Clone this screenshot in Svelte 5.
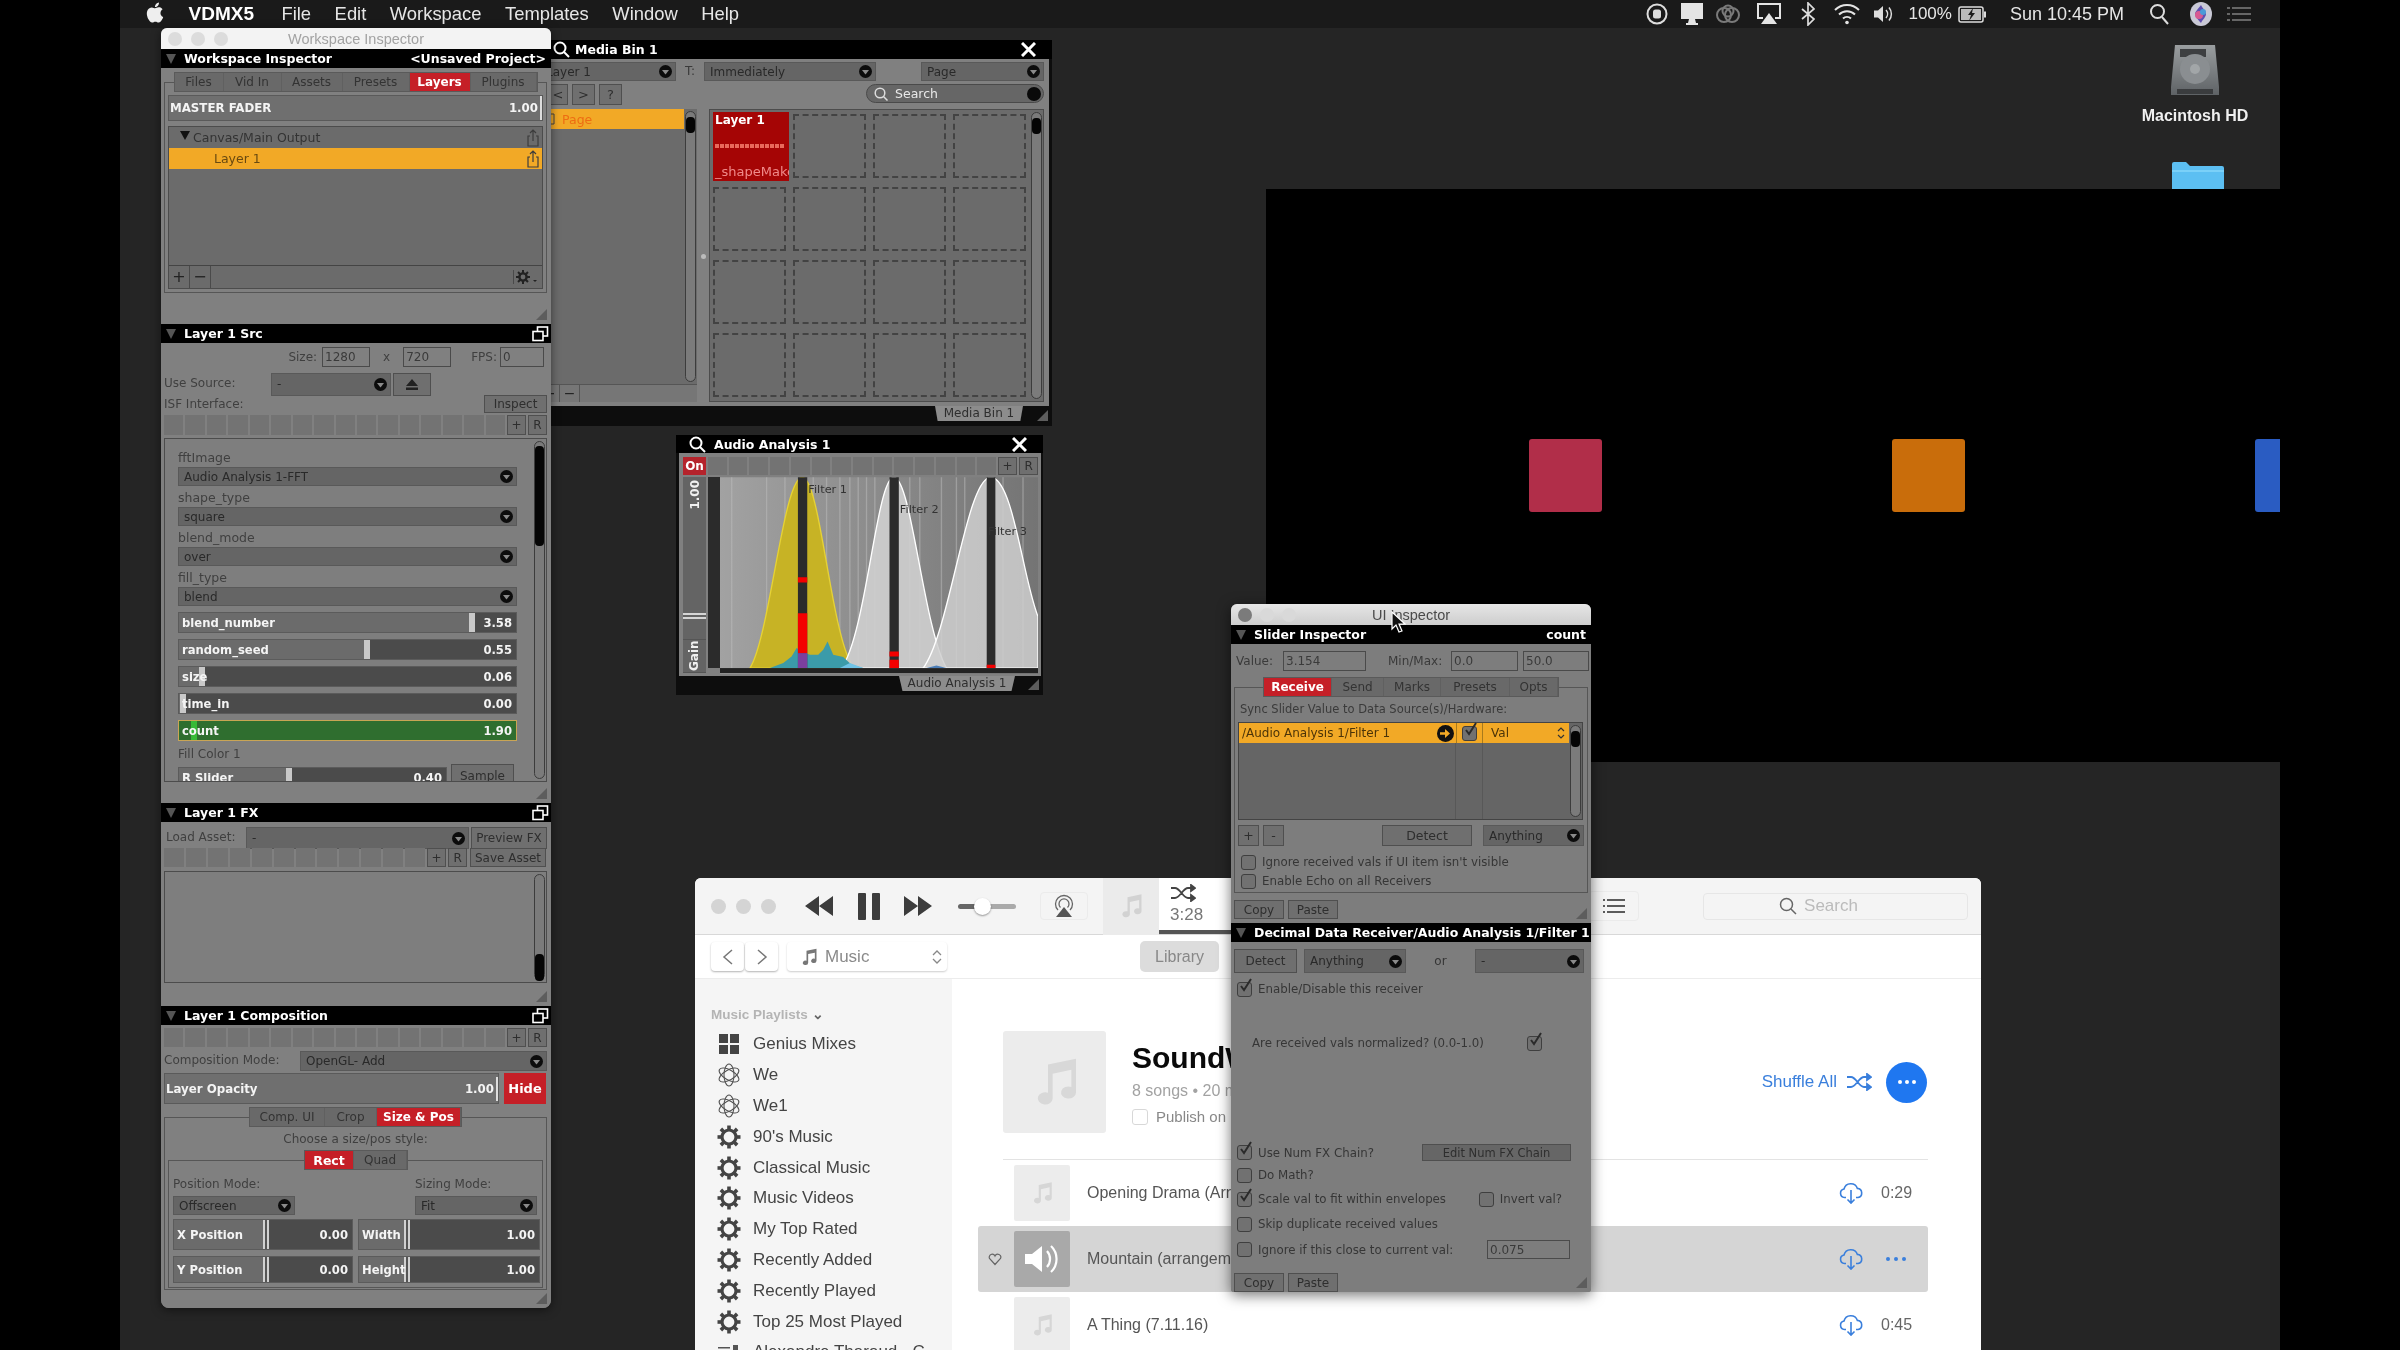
<script>
  const wsTabs = [
    { t: 'Files', w: 49 }, { t: 'Vid In', w: 58 }, { t: 'Assets', w: 61 },
    { t: 'Presets', w: 67 }, { t: 'Layers', w: 61, on: true }, { t: 'Plugins', w: 66 }
  ];
  const compTabs = [{ t: 'Comp. UI', w: 75 }, { t: 'Crop', w: 52 }, { t: 'Size & Pos', w: 84, on: true }];
  const rectTabs = [{ t: 'Rect', w: 49, on: true }, { t: 'Quad', w: 53 }];
  const uiTabs = [
    { t: 'Receive', w: 68, on: true }, { t: 'Send', w: 52 }, { t: 'Marks', w: 57 },
    { t: 'Presets', w: 69 }, { t: 'Opts', w: 48 }
  ];
  const isfSelects = [
    { label: 'fftImage', val: 'Audio Analysis 1-FFT' },
    { label: 'shape_type', val: 'square' },
    { label: 'blend_mode', val: 'over' },
    { label: 'fill_type', val: 'blend' }
  ];
  const isfSliders = [
    { label: 'blend_number', val: '3.58', pct: 86 },
    { label: 'random_seed', val: '0.55', pct: 55 },
    { label: 'size', val: '0.06', pct: 6 },
    { label: 'time_in', val: '0.00', pct: 0.4 }
  ];
  const lights = [1, 2, 3];
  const strip16 = Array(16).fill(0);
  const strip14 = Array(12).fill(0);
  const cells = Array(15).fill(0);
  const lines = [185, 290, 345, 430, 470, 510, 540, 565, 590, 615, 720, 750, 815, 860, 885, 1000, 1060];
  const playlists = ['90\'s Music', 'Classical Music', 'Music Videos', 'My Top Rated', 'Recently Added', 'Recently Played', 'Top 25 Most Played'];
  const gearTeeth = [0, 45, 90, 135, 180, 225, 270, 315];
  const atom = [0, 60, 120];
  const songs = [
    { name: 'Opening Drama (Arrangement)', time: '0:29' },
    { name: 'Mountain (arrangement)', playing: true },
    { name: 'A Thing (7.11.16)', time: '0:45' }
  ];
</script>

{#snippet head(title, right, showIcon)}
  <div class="head">
    <span class="disclosure"></span>
    <span class="head-title">{title}</span>
    {#if right}<span class="head-right">{right}</span>{/if}
    {#if showIcon}
      <svg class="detach" width="17" height="16" viewBox="0 0 17 16" fill="none" stroke="#fff" stroke-width="1.6">
        <rect x="5.5" y="1" width="10" height="9" /><rect x="1" y="5.5" width="10" height="9" fill="#000" />
      </svg>
    {/if}
  </div>
{/snippet}

{#snippet floatHead(title)}
  <div class="head float">
    <svg width="19" height="19" viewBox="0 0 19 19" fill="none" stroke="#fff" stroke-width="2"><circle cx="8" cy="8" r="5.5" /><path d="M12 12l5 5" /></svg>
    <span class="head-title">{title}</span>
    <svg class="close" width="15" height="15" viewBox="0 0 15 15" stroke="#fff" stroke-width="3"><path d="M1 1l13 13M14 1L1 14" /></svg>
  </div>
{/snippet}

{#snippet sel(text)}
  <div class="sel">
    <span>{text}</span>
    <svg width="13" height="13" viewBox="0 0 13 13"><circle cx="6.5" cy="6.5" r="6.5" fill="#0c0c0c" /><path d="M3 5h7L6.5 9.5z" fill="#8a8a8a" /></svg>
  </div>
{/snippet}

{#snippet tabs(items)}
  <div class="tabs">
    {#each items as tab}
      <span class="tab" class:on={tab.on} style="width:{tab.w}px">{tab.t}</span>
    {/each}
  </div>
{/snippet}

{#snippet strip(list)}
  <div class="strip">
    {#each list as _}<span class="cell"></span>{/each}
    <span class="btn mini">+</span><span class="btn mini">R</span>
  </div>
{/snippet}

{#snippet slider(s, dbl)}
  <div class="slider" class:dbl style="--pct:{s.pct}%">
    <span class="sl-fill"></span>
    <span class="sl-handle"></span>
    <span class="sl-label">{s.label}</span>
    <span class="sl-val">{s.val}</span>
  </div>
{/snippet}

{#snippet check(on, label)}
  <div class="check">
    <span class="box">
      {#if on}
        <svg width="17" height="17" viewBox="0 0 17 17" fill="none" stroke="#2b2b2b" stroke-width="2"><path d="M3 8l3 4 7-11" /></svg>
      {/if}
    </span>
    {#if label}<span>{label}</span>{/if}
  </div>
{/snippet}

{#snippet tri()}
  <svg class="tri" width="11" height="11" viewBox="0 0 11 11"><path d="M11 0v11H0z" fill="#5d5d5d" /></svg>
{/snippet}

{#snippet vscroll(top, height)}
  <div class="vscroll"><span style="top:{top}px;height:{height}px"></span></div>
{/snippet}

{#snippet note(size, color)}
  <svg width={size} height={size} viewBox="0 0 24 24" fill={color}>
    <path d="M9 4.5L21 2v14.5a3.2 2.6 0 1 1-2-2.4V6.8L11 8.5V19a3.2 2.6 0 1 1-2-2.4z" />
  </svg>
{/snippet}

{#snippet shuffle(w, color)}
  <svg width={w} viewBox="0 0 26 18" fill="none" stroke={color} stroke-width="1.8">
    <path d="M1 4h4c5 0 8 10 13 10h4M1 14h4c5 0 8-10 13-10h4" />
    <path d="M21 1l4 3-4 3zM21 11l4 3-4 3z" fill={color} />
  </svg>
{/snippet}

{#snippet cloud()}
  <svg width="24" height="24" viewBox="0 0 24 24" fill="none" stroke="#3a7fdc" stroke-width="1.6">
    <path d="M7 16.5H5.5a4.3 4.3 0 0 1-.5-8.5 7 7 0 0 1 13.4-.6 4.6 4.6 0 0 1 .6 9.1H17" />
    <path d="M12 9v13M8.5 18.5L12 22l3.5-3.5" />
  </svg>
{/snippet}

<div class="screen">
  <header class="menubar">
    <svg class="apple" width="20" height="23" viewBox="0 0 24 24" fill="#eee"><path d="M12.152 6.896c-.948 0-2.415-1.078-3.96-1.04-2.04.027-3.91 1.183-4.961 3.014-2.117 3.675-.546 9.103 1.519 12.09 1.013 1.454 2.208 3.09 3.792 3.039 1.52-.065 2.09-.987 3.935-.987 1.831 0 2.35.987 3.96.948 1.637-.026 2.676-1.48 3.676-2.948 1.156-1.688 1.636-3.325 1.662-3.415-.039-.013-3.182-1.221-3.22-4.857-.026-3.04 2.48-4.494 2.597-4.559-1.429-2.09-3.623-2.324-4.39-2.376-2-.156-3.675 1.09-4.61 1.09zM15.53 3.83c.843-1.012 1.4-2.427 1.245-3.83-1.207.052-2.662.805-3.532 1.818-.78.896-1.454 2.338-1.273 3.714 1.338.104 2.715-.688 3.559-1.701" /></svg>
    <strong class="appname">VDMX5</strong>
    <span>File</span><span>Edit</span><span>Workspace</span><span>Templates</span><span>Window</span><span>Help</span>
    <div class="status">
      <svg width="22" height="22" viewBox="0 0 22 22" fill="none" stroke="#ddd" stroke-width="2"><circle cx="11" cy="11" r="9.5" /><rect x="7" y="6.5" width="8" height="9" rx="2.5" fill="#ddd" stroke="none" /></svg>
      <svg class="m-display" width="24" height="24" viewBox="0 0 24 24"><rect x="1" y="1" width="22" height="16" fill="#e4e4e4" /><path d="M9 17h6l1 4H8zM6 21h12v2H6z" fill="#e4e4e4" /></svg>
      <svg class="m-cc" width="26" height="20" viewBox="0 0 26 20" fill="none" stroke="#7a7a7a" stroke-width="2"><circle cx="9" cy="11" r="7" /><circle cx="17" cy="11" r="7" /><circle cx="13" cy="7" r="5.5" /></svg>
      <svg class="m-air" width="24" height="22" viewBox="0 0 24 22" fill="none" stroke="#e4e4e4" stroke-width="2"><path d="M6 15H1V1h22v14h-5" /><path d="M12 10l8 11H4z" fill="#e4e4e4" stroke="none" /></svg>
      <svg class="m-bt" width="14" height="24" viewBox="0 0 14 24" fill="none" stroke="#ddd" stroke-width="1.7"><path d="M1 7l12 10-6 6V1l6 6L1 17" /></svg>
      <svg class="m-wifi" width="26" height="22" viewBox="0 0 26 22" fill="none" stroke="#e4e4e4" stroke-width="2"><path d="M1 7a17 17 0 0 1 24 0M5 11.500a11.500 11.500 0 0 1 16 0M9 15.500a6 6 0 0 1 8 0" /><circle cx="13" cy="19.500" r="1.800" fill="#e4e4e4" stroke="none" /></svg>
      <svg class="m-vol" width="22" height="20" viewBox="0 0 22 20" fill="none" stroke="#ddd" stroke-width="1.5"><path d="M1 6.500h4L10 2v16l-5-4.500H1z" fill="#ddd" stroke="none" /><path d="M13 6a6 6 0 0 1 0 8M16 3.500a10 10 0 0 1 0 13" /></svg>
      <span class="m-pct">100%</span>
      <svg class="m-batt" width="29" height="17" viewBox="0 0 29 17"><rect x="1" y="1" width="24" height="15" rx="2" fill="none" stroke="#ddd" stroke-width="1.500" /><rect x="3" y="3" width="20" height="11" fill="#bbb" /><rect x="26" y="5.500" width="2" height="6" fill="#ddd" /><path d="M15 2l-5 7h3l-2 6 6-8h-3z" fill="#1a1a1a" /></svg>
      <span class="m-time">Sun 10:45 PM</span>
      <svg class="m-search" width="20" height="22" viewBox="0 0 20 22" fill="none" stroke="#ddd" stroke-width="2"><circle cx="8.500" cy="8.500" r="6.500" /><path d="M13 14l6 7" /></svg>
      <svg class="m-siri" width="22" height="24" viewBox="0 0 22 24"><ellipse cx="11" cy="12" rx="11" ry="12" fill="#c9c9d6" /><path d="M11 3c-3 4-6 7-6 9s3 6 6 9c2-4 5-6 5-9s-3-5-5-9z" fill="#5e4fb0" /><circle cx="9" cy="13" r="4" fill="#d85a92" /><circle cx="13" cy="10" r="3" fill="#4b9ad8" /></svg>
      <svg class="m-list" width="24" height="16" viewBox="0 0 24 16" fill="#666"><path d="M0 1h3v2H0zM5 1h19v2H5zM0 7h3v2H0zM5 7h19v2H5zM0 13h3v2H0zM5 13h19v2H5z" /></svg>
    </div>
  </header>

  <div class="drive">
    <svg width="48" height="50" viewBox="0 0 48 50">
      <defs><linearGradient id="hd" x1="0" y1="0" x2="0" y2="1"><stop offset="0" stop-color="#9a9ea0" /><stop offset="1" stop-color="#5e6265" /></linearGradient></defs>
      <path d="M4 0h40l4 42v8H0v-8z" fill="url(#hd)" />
      <rect x="9" y="4" width="26" height="8" fill="#3d3f41" />
      <circle cx="24" cy="24" r="15" fill="#8a8e91" /><circle cx="24" cy="24" r="5" fill="#a2a6a8" />
      <rect x="6" y="44" width="36" height="5" fill="#3a3c3e" />
    </svg>
    <span>Macintosh HD</span>
  </div>
  <svg class="folder" width="52" height="28" viewBox="0 0 52 28"><path d="M0 28V2q0-2 2-2h12l4 4h32q2 0 2 2v22z" fill="#5cbff2" /><path d="M0 8h52v2H0z" fill="#7ad0f8" /></svg>

  <div class="canvas">
    <span class="sq sq-red"></span><span class="sq sq-orange"></span><span class="sq sq-blue"></span>
  </div>

  <section class="itunes">
    <div class="it-toolbar">
      <div class="it-lights">{#each lights as _}<span></span>{/each}</div>
      <svg class="it-rew" width="28" height="20" viewBox="0 0 28 20" fill="#3c3c3c"><path d="M14 0v20L0 10zM28 0v20L14 10z" /></svg>
      <div class="it-pause"><span></span><span></span></div>
      <svg class="it-ff" width="28" height="20" viewBox="0 0 28 20" fill="#3c3c3c"><path d="M0 0v20l14-10zM14 0v20l14-10z" /></svg>
      <div class="it-vol"><span class="knob"></span></div>
      <div class="it-air">
        <svg width="22" height="24" viewBox="0 0 22 24" fill="none" stroke="#666" stroke-width="1.300"><path d="M5 16a8.500 8.500 0 1 1 12 0M7.500 13.500a5 5 0 1 1 7 0" /><path d="M11 13l8 10H3z" fill="#555" stroke="none" /></svg>
      </div>
      <div class="it-art">{@render note(28, '#d2d2d2')}</div>
      <div class="it-lcd">
        {@render shuffle(26, '#444')}
        <span>3:28</span>
      </div>
      <div class="it-listbtn">
        <svg width="22" height="16" viewBox="0 0 22 16" fill="#5b5b5b"><path d="M0 1h2v2H0zM4 1h18v2H4zM0 7h2v2H0zM4 7h18v2H4zM0 13h2v2H0zM4 13h18v2H4z" /></svg>
      </div>
      <div class="it-search">
        <svg width="18" height="18" viewBox="0 0 18 18" fill="none" stroke="#666" stroke-width="1.500"><circle cx="7.500" cy="7.500" r="6" /><path d="M12 12l5 5" /></svg>
        <span>Search</span>
      </div>
    </div>
    <div class="it-nav">
      <div class="it-arrows">
        <span><svg width="12" height="16" viewBox="0 0 12 16" fill="none" stroke="#777" stroke-width="1.500"><path d="M10 1L2 8l8 7" /></svg></span>
        <span><svg width="12" height="16" viewBox="0 0 12 16" fill="none" stroke="#777" stroke-width="1.500"><path d="M2 1l8 7-8 7" /></svg></span>
      </div>
      <div class="it-popup">
        {@render note(20, '#777')}
        <span>Music</span>
        <svg class="updown" width="10" height="16" viewBox="0 0 10 16" fill="none" stroke="#888" stroke-width="1.300"><path d="M1 6l4-4 4 4M1 10l4 4 4-4" /></svg>
      </div>
      <span class="it-library">Library</span>
    </div>
    <div class="it-content">
      <aside class="it-side">
        <div class="side-title">Music Playlists <span>⌄</span></div>
        <div class="side-row">
          <span class="side-ic"><svg width="20" height="20" viewBox="0 0 20 20" fill="#444"><path d="M0 0h9v9H0zM11 0h9v9h-9zM0 11h9v9H0zM11 11h9v9h-9z" /></svg></span>
          Genius Mixes
        </div>
        {#each ['We', 'We1'] as name}
          <div class="side-row">
            <span class="side-ic"><svg width="24" height="24" viewBox="0 0 24 24" fill="none" stroke="#555" stroke-width="1.100">{#each atom as a}<ellipse cx="12" cy="12" rx="5" ry="11" transform="rotate({a} 12 12)" />{/each}</svg></span>
            {name}
          </div>
        {/each}
        {#each playlists as name}
          <div class="side-row">
            <span class="side-ic"><svg width="24" height="24" viewBox="0 0 24 24"><circle cx="12" cy="12" r="7" fill="none" stroke="#444" stroke-width="3.200" />{#each gearTeeth as a}<rect x="10.200" y="0.500" width="3.600" height="5" fill="#444" transform="rotate({a} 12 12)" />{/each}</svg></span>
            {name}
          </div>
        {/each}
        <div class="side-row">
          <span class="side-ic"><svg width="22" height="14" viewBox="0 0 22 14" fill="#555"><path d="M0 2h12v1.500H0zM0 6h12v1.500H0zM0 10h12v1.500H0zM15 0h5v5h-2v7h-3z" /></svg></span>
          Alexandre Tharaud - C
        </div>
      </aside>
      <main class="it-main">
        <div class="hero">
          <div class="hero-art">{@render note(56, '#d8d8d8')}</div>
          <div class="hero-info">
            <h1>SoundWorks</h1>
            <p>8 songs • 20 minutes</p>
            <label><span class="pub-box"></span>Publish on profile</label>
          </div>
          <div class="hero-actions">
            <span class="shuffle-link">Shuffle All</span>
            {@render shuffle(26, '#3a7fdc')}
            <span class="more-circle"><i></i><i></i><i></i></span>
          </div>
        </div>
        <div class="songs">
          {#each songs as song}
            <div class="song" class:playing={song.playing}>
              <span class="song-heart">
                {#if song.playing}
                  <svg width="14" height="14" viewBox="0 0 14 14" fill="none" stroke="#666" stroke-width="1.200"><path d="M7 12.500L1.500 6.500a3 3 0 0 1 5.500-2.500 3 3 0 0 1 5.500 2.500z" /></svg>
                {/if}
              </span>
              <span class="song-art">
                {#if song.playing}
                  <svg width="38" height="38" viewBox="0 0 38 38" fill="none" stroke="#fff" stroke-width="2.200"><path d="M2 14h7l10-8v26l-10-8H2z" fill="#fff" stroke="none" /><path d="M24 11a12 12 0 0 1 0 16M28 6a18 18 0 0 1 0 26" /></svg>
                {:else}
                  {@render note(26, '#d6d6d6')}
                {/if}
              </span>
              <span class="song-name">{song.name}</span>
              <span class="song-cloud">{@render cloud()}</span>
              {#if song.time}
                <span class="song-time">{song.time}</span>
              {:else}
                <span class="song-more"><i></i><i></i><i></i></span>
              {/if}
            </div>
          {/each}
        </div>
      </main>
    </div>
  </section>

  <section class="bin">
    {@render floatHead('Media Bin 1')}
    <div class="bin-body">
      <div class="bin-row1">
        {@render sel('Layer 1')}
        <span class="t-label">T:</span>
        {@render sel('Immediately')}
        <span></span>
        {@render sel('Page')}
      </div>
      <div class="bin-row2">
        <span class="btn lt">&lt;</span><span class="btn">&gt;</span><span class="btn">?</span>
        <div class="pill">
          <svg width="14" height="14" viewBox="0 0 14 14" fill="none" stroke="#ddd" stroke-width="1.500"><circle cx="6" cy="6" r="4.800" /><path d="M9.500 9.500l4 4" /></svg>
          <span>Search</span>
          <i></i>
        </div>
      </div>
      <div class="bin-main">
        <div class="bin-pages">
          <div class="bin-list">
            <div class="bin-page">
              <svg width="10" height="12" viewBox="0 0 10 12" fill="none" stroke="#444"><path d="M1 1h8v10H1z" /></svg>
              <span>Page</span>
            </div>
            {@render vscroll(5, 16)}
          </div>
          <div class="bin-bar"><span>+</span><span>−</span></div>
          <span class="knob-dot"></span>
        </div>
        <div class="bin-grid">
          <div class="clip">
            <b>Layer 1</b>
            <span class="clip-dash"></span>
            <span class="clip-name">_shapeMaker</span>
          </div>
          {#each cells as _}<span class="slot"></span>{/each}
          {@render vscroll(5, 16)}
        </div>
      </div>
    </div>
    <div class="bin-foot"><span>Media Bin 1</span>{@render tri()}</div>
  </section>

  <section class="audio">
    {@render floatHead('Audio Analysis 1')}
    <div class="audio-body">
      <div class="audio-top">
        <span class="on-btn">On</span>
        {@render strip(Array(14).fill(0))}
      </div>
      <div class="audio-main">
        <div class="gain">
          <span class="gain-text">1.00</span>
          <span class="gain-lines"></span>
          <span class="gain-text gain-label">Gain</span>
        </div>
        <span class="gain-bar"></span>
        <svg class="graph" width="318" height="197" viewBox="150 172 955 590">
          <defs><linearGradient id="bg" x1="0" y1="0" x2="1" y2="0"><stop offset="0" stop-color="#a2a2a2" /><stop offset="1" stop-color="#747474" /></linearGradient></defs>
          <rect x="150" y="172" width="955" height="590" fill="url(#bg)" />
          {#each lines as x}<path d="M{x} 172V745" stroke="#bdbdbd" stroke-width="4" opacity="0.5" />{/each}
          <path d="M240 745C300 650 340 172 397 172C450 172 480 620 545 735V745z" fill="#c7b325" stroke="#e6d235" stroke-width="4" />
          <path d="M515 745C590 640 620 172 672 172C725 172 760 620 830 745z" fill="#cfcfcf" fill-opacity="0.9" stroke="#fff" stroke-width="4" />
          <path d="M760 745C840 640 890 172 963 172C1030 172 1060 480 1105 590V745z" fill="#cfcfcf" fill-opacity="0.85" stroke="#fff" stroke-width="4" />
          <path d="M300 745L340 730 365 710 380 685 395 695 420 705 445 705 460 690 473 665 490 705 520 712 545 735 580 745z" fill="#3b9ba9" />
          <path d="M510 745L540 730 580 745z" fill="#6fc3e6" />
          <path d="M770 745L800 737 830 745z" fill="#4d7fb8" />
          <path d="M384 172h28v573h-28zM659 172h28v573h-28zM951 172h26v573h-26z" fill="#2b2b2b" />
          <path d="M384 472h28v16h-28zM384 580h28v120h-28zM659 695h28v15h-28zM659 720h28v25h-28zM951 735h26v10h-26z" fill="#f40000" />
          <path d="M384 700h28v45h-28z" fill="#7c3f9e" />
          <rect x="150" y="745" width="955" height="15" fill="#222" />
          <text x="415" y="218">Filter 1</text>
          <text x="690" y="280">Filter 2</text>
          <text x="955" y="344">Filter 3</text>
        </svg>
      </div>
    </div>
    <div class="bin-foot audio-foot"><span>Audio Analysis 1</span>{@render tri()}</div>
  </section>

  <section class="inspector">
    <div class="ws-title">
      <div class="ws-lights">{#each lights as _}<span></span>{/each}</div>
      <span>Workspace Inspector</span>
    </div>
    {@render head('Workspace Inspector', '<Unsaved Project>')}
    <div class="sec sec-ws">
      {@render tabs(wsTabs)}
      <div class="group ws-group">
        <div class="fader"><span>MASTER FADER</span><span class="fader-val">1.00</span></div>
        <div class="list ws-list">
          <div class="ws-row"><span class="caret"></span>Canvas/Main Output
            <svg class="share" width="12" height="18" viewBox="0 0 12 18" fill="none" stroke="#3c3c3c" stroke-width="1.200"><path d="M3 7H1v10h10V7H9M6 12V1M3 4l3-3 3 3" /></svg>
          </div>
          <div class="ws-row active">Layer 1
            <svg class="share" width="12" height="18" viewBox="0 0 12 18" fill="none" stroke="#3c3c3c" stroke-width="1.200"><path d="M3 7H1v10h10V7H9M6 12V1M3 4l3-3 3 3" /></svg>
          </div>
          <div class="ws-bar">
            <span>+</span><span>−</span>
            <svg class="gear" width="22" height="14" viewBox="0 0 22 14"><circle cx="7" cy="7" r="3.600" fill="none" stroke="#222" stroke-width="2.400" />{#each gearTeeth as a}<rect x="6" y="0" width="2" height="3" fill="#222" transform="rotate({a} 7 7)" />{/each}<path d="M17 10h4l-2 2z" fill="#222" /></svg>
          </div>
        </div>
      </div>
      {@render tri()}
    </div>

    {@render head('Layer 1 Src', '', true)}
    <div class="sec sec-src">
      <div class="size-row">
        <span>Size:</span><span class="field w48">1280</span><span class="x">x</span><span class="field w48">720</span>
        <span class="fps">FPS:</span><span class="field w44">0</span>
      </div>
      <div class="source-row">
        <span>Use Source:</span>
        {@render sel('-')}
        <span class="btn"><svg width="14" height="11" viewBox="0 0 14 11" fill="#222"><path d="M7 0l6 7H1zM1 8.500h12V11H1z" /></svg></span>
      </div>
      <div class="isf-row"><span>ISF Interface:</span><span class="btn inspect">Inspect</span></div>
      {@render strip(strip16)}
      <div class="list params">
        {#each isfSelects as s}
          <div class="param">
            <label>{s.label}</label>
            {@render sel(s.val)}
          </div>
        {/each}
        {#each isfSliders as s}
          {@render slider(s)}
        {/each}
        <div class="slider count" style="--pct:3.600%">
          <span class="sl-fill"></span><span class="sl-handle"></span>
          <span class="sl-label">count</span><span class="sl-val">1.90</span>
        </div>
        <label class="fill-label">Fill Color 1</label>
        <div class="rslider">
          {@render slider({ label: 'R Slider', val: '0.40', pct: 40 })}
          <span class="btn sample">Sample</span>
        </div>
        {@render vscroll(4, 100)}
      </div>
      {@render tri()}
    </div>

    {@render head('Layer 1 FX', '', true)}
    <div class="sec sec-fx">
      <div class="load-row">
        <span>Load Asset:</span>
        {@render sel('-')}
        <span class="btn">Preview FX</span>
      </div>
      <div class="save-row">
        {@render strip(strip14)}
        <span class="btn">Save Asset</span>
      </div>
      <div class="list fx-list">{@render vscroll(79, 27)}</div>
      {@render tri()}
    </div>

    {@render head('Layer 1 Composition', '', true)}
    <div class="sec sec-comp">
      {@render strip(strip16)}
      <div class="mode-row">
        <span>Composition Mode:</span>
        {@render sel('OpenGL- Add')}
      </div>
      <div class="opacity-row">
        <div class="fader"><span>Layer Opacity</span><span class="fader-val">1.00</span></div>
        <span class="hide">Hide</span>
      </div>
      <div class="comp-tabs">{@render tabs(compTabs)}</div>
      <div class="group comp-group">
        <p class="choose">Choose a size/pos style:</p>
        <div class="rect-tabs">{@render tabs(rectTabs)}</div>
        <div class="group inner-group">
          <div class="modes">
            <div><label>Position Mode:</label>{@render sel('Offscreen')}</div>
            <div><label>Sizing Mode:</label>{@render sel('Fit')}</div>
          </div>
          <div class="xy tall">
            {@render slider({ label: 'X Position', val: '0.00', pct: 50 }, true)}
            {@render slider({ label: 'Width', val: '1.00', pct: 25 }, true)}
          </div>
          <div class="xy">
            {@render slider({ label: 'Y Position', val: '0.00', pct: 50 }, true)}
            {@render slider({ label: 'Height', val: '1.00', pct: 25 }, true)}
          </div>
        </div>
      </div>
      {@render tri()}
    </div>
  </section>

  <section class="uiwin">
    <div class="ui-title">
      <div class="ui-lights">{#each lights as _}<span></span>{/each}</div>
      <span>UI Inspector</span>
    </div>
    {@render head('Slider Inspector', 'count')}
    <div class="sec ui-sec1">
      <div class="value-row">
        <span>Value:</span><span class="field">3.154</span><span class="minmax">Min/Max:</span><span class="field">0.0</span><span class="field">50.0</span>
      </div>
      <div class="ui-tabs">{@render tabs(uiTabs)}</div>
      <div class="group ui-group">
        <p class="sync">Sync Slider Value to Data Source(s)/Hardware:</p>
        <div class="list recv">
          <div class="recv-row">
            <span class="recv-name">/Audio Analysis 1/Filter 1
              <svg width="17" height="17" viewBox="0 0 17 17"><circle cx="8.500" cy="8.500" r="8.500" fill="#111" /><path d="M3 7.300h5V4l5 4.500-5 4.500V9.700H3z" fill="#f2a926" /></svg>
            </span>
            <span class="recv-check">{@render check(true)}</span>
            <span class="recv-val">Val
              <svg width="8" height="14" viewBox="0 0 8 14" fill="none" stroke="#333" stroke-width="1.200"><path d="M1 5l3-3 3 3M1 9l3 3 3-3" /></svg>
            </span>
          </div>
          <div class="recv-cols"><span></span><span></span></div>
          {@render vscroll(5, 16)}
        </div>
        <div class="recv-btns">
          <span class="btn">+</span><span class="btn">-</span><span></span>
          <span class="btn">Detect</span>
          {@render sel('Anything')}
        </div>
        <div class="ui-checks">
          {@render check(false, "Ignore received vals if UI item isn't visible")}
          {@render check(false, 'Enable Echo on all Receivers')}
        </div>
      </div>
      <div class="copy-row"><span class="btn">Copy</span><span class="btn">Paste</span></div>
      {@render tri()}
    </div>
    {@render head('Decimal Data Receiver/Audio Analysis 1/Filter 1')}
    <div class="sec ui-sec2">
      <div class="detect-row">
        <span class="btn">Detect</span>
        {@render sel('Anything')}
        <span class="or">or</span>
        {@render sel('-')}
      </div>
      <div class="r-enable">{@render check(true, 'Enable/Disable this receiver')}</div>
      <div class="r-norm"><span>Are received vals normalized? (0.0-1.0)</span>{@render check(true)}</div>
      <div class="r-chain">{@render check(true, 'Use Num FX Chain?')}<span class="btn">Edit Num FX Chain</span></div>
      <div class="r-math">{@render check(false, 'Do Math?')}</div>
      <div class="r-scale">{@render check(true, 'Scale val to fit within envelopes')}{@render check(false, 'Invert val?')}</div>
      <div class="r-skip">{@render check(false, 'Skip duplicate received values')}</div>
      <div class="r-ignore">{@render check(false, 'Ignore if this close to current val:')}<span class="field">0.075</span></div>
      <div class="copy-row last"><span class="btn">Copy</span><span class="btn">Paste</span></div>
      {@render tri()}
    </div>
  </section>

  <svg class="cursor" width="15" height="23" viewBox="0 0 15 23"><path d="M1 1v17l4-4 3 7 3-1-3-7h6z" fill="#111" stroke="#fff" stroke-width="1.200" /></svg>
</div>

<style>
  :global(body) {
    margin: 0;
    background: #000;
  }
  .screen {
    position: relative;
    width: 2160px;
    height: 1350px;
    margin-left: 120px;
    overflow: hidden;
    background: #252525;
    font-family: "DejaVu Sans", sans-serif;
    font-size: 12px;
    color: #363636;
    filter: blur(0.5px);
  }

  /* menu bar */
  .menubar {
    height: 28px;
    display: flex;
    align-items: center;
    gap: 23.500px;
    padding-left: 25px;
    background: #1a1a1a;
    color: #e6e6e6;
    font: 18.400px "Liberation Sans", sans-serif;
  }
  .apple {
    margin-top: -4px;
  }
  .appname {
    color: #fff;
    font-size: 19px;
    margin-right: 4px;
  }
  .status {
    margin-left: auto;
    display: flex;
    align-items: center;
    padding-right: 29px;
    font-size: 17px;
  }
  .m-display { margin-left: 12px; }
  .m-cc { margin-left: 11px; }
  .m-air { margin-left: 16px; }
  .m-bt { margin-left: 20px; }
  .m-wifi { margin-left: 19px; }
  .m-vol { margin-left: 13px; }
  .m-pct { margin-left: 13px; }
  .m-batt { margin-left: 6px; }
  .m-time { margin-left: 23px; font-size: 18px; }
  .m-search { margin-left: 25px; }
  .m-siri { margin-left: 21px; }
  .m-list { margin-left: 15px; }

  /* desktop */
  .drive {
    position: absolute;
    left: 2000px;
    top: 45px;
    width: 150px;
    display: flex;
    flex-direction: column;
    align-items: center;
    gap: 12px;
    color: #f0f0f0;
    font: bold 16px "Liberation Sans", sans-serif;
  }
  .folder {
    position: absolute;
    left: 2052px;
    top: 162px;
  }
  .canvas {
    position: absolute;
    left: 1146px;
    top: 189px;
    width: 1014px;
    height: 573px;
    background: #000;
    overflow: hidden;
  }
  .sq {
    position: absolute;
    top: 250px;
    width: 73px;
    height: 73px;
    border-radius: 3px;
  }
  .sq-red { left: 263px; background: #b12e49; }
  .sq-orange { left: 626px; background: #c96d0b; }
  .sq-blue { left: 989px; background: #2a5cc2; }
  .cursor {
    position: absolute;
    left: 1271px;
    top: 611px;
  }

  /* shared VDMX chrome */
  .head {
    height: 19px;
    display: flex;
    align-items: center;
    background: #000;
    color: #fff;
    font-size: 12.500px;
    font-weight: bold;
    flex: none;
  }
  .disclosure {
    width: 0;
    height: 0;
    margin: 1px 8px 0 5px;
    border: 5.500px solid transparent;
    border-top: 10px solid #555;
    border-bottom: 0;
  }
  .head-title {
    white-space: nowrap;
  }
  .head-right {
    margin-left: auto;
    padding-right: 5px;
  }
  .detach {
    margin-left: auto;
    margin-right: 2px;
  }
  .float {
    gap: 7px;
    padding-left: 10px;
  }
  .close {
    margin-left: auto;
    margin-right: 16px;
  }
  .sec {
    position: relative;
    box-sizing: border-box;
    padding: 0 4px 0 3px;
    background: #808080;
    overflow: hidden;
  }
  .tabs {
    display: flex;
    height: 18px;
    position: relative;
    z-index: 1;
    width: max-content;
    background: #696969;
    box-shadow: 0 0 0 1px #5a5a5a;
  }
  .tab {
    display: flex;
    align-items: center;
    justify-content: center;
    box-sizing: border-box;
    border-right: 1px solid #606060;
    color: #333;
  }
  .tab.on {
    background: #c51f27;
    color: #fff;
    font-weight: bold;
  }
  .group {
    box-sizing: border-box;
    border: 1px solid #565656;
  }
  .list {
    position: relative;
    box-sizing: border-box;
    background: #6b6b6b;
    border: 1px solid #4c4c4c;
  }
  .btn {
    display: flex;
    align-items: center;
    justify-content: center;
    box-sizing: border-box;
    background: #6f6f6f;
    border: 1px solid #4f4f4f;
    color: #2e2e2e;
    white-space: nowrap;
  }
  .mini {
    width: 19px;
    flex: none;
  }
  .field {
    display: flex;
    align-items: center;
    box-sizing: border-box;
    height: 20px;
    padding-left: 2px;
    border: 1px solid #4a4a4a;
    color: #3a3a3a;
  }
  .w48 { width: 48px; }
  .w44 { width: 44px; }
  .sel {
    display: flex;
    align-items: center;
    justify-content: space-between;
    box-sizing: border-box;
    height: 100%;
    padding: 0 3px 0 5px;
    background: #656565;
    border: 1px solid #595959;
    color: #292929;
    min-width: 0;
    white-space: nowrap;
  }
  .sel span {
    overflow: hidden;
  }
  .strip {
    display: flex;
    gap: 2px;
    height: 19px;
  }
  .cell {
    flex: 1;
    background: #737373;
  }
  .tri {
    position: absolute;
    right: 4px;
    bottom: 4px;
  }
  .vscroll {
    position: absolute;
    top: 2px;
    bottom: 2px;
    right: 1px;
    width: 11px;
    box-sizing: border-box;
    border: 1.500px solid #3c3c3c;
    border-radius: 6px;
    background: #7b7b7b;
  }
  .vscroll span {
    position: absolute;
    left: 0;
    right: 0;
    border-radius: 4px;
    background: #050505;
  }

  /* sliders */
  .slider {
    position: relative;
    display: flex;
    align-items: center;
    justify-content: space-between;
    box-sizing: border-box;
    height: 21px;
    padding: 0 4px 0 3px;
    background: #4b4b4b;
    border: 1px solid #5b5b5b;
    color: #f4f4f4;
    font-weight: bold;
    font-size: 11.600px;
    white-space: nowrap;
    overflow: hidden;
  }
  .sl-fill {
    position: absolute;
    left: 0;
    top: 0;
    bottom: 0;
    width: var(--pct);
    background: #6b6b6b;
  }
  .sl-handle {
    position: absolute;
    left: var(--pct);
    top: 0;
    bottom: 0;
    width: 6px;
    background: #c9c9c9;
  }
  .sl-label, .sl-val {
    position: relative;
  }
  .dbl {
    height: 100%;
  }
  .dbl .sl-handle {
    background: linear-gradient(90deg, #d0d0d0 33%, #555 33%, #555 66%, #d0d0d0 66%);
  }
  .count {
    background: #2f6e2f;
    border: 1px solid #c9a555;
  }
  .count .sl-fill {
    background: #2f6e2f;
  }
  .count .sl-handle {
    background: #37b937;
  }
  .fader {
    display: flex;
    align-items: center;
    justify-content: space-between;
    box-sizing: border-box;
    padding-left: 1px;
    background: #6f6f6f;
    border: 1px solid #5a5a5a;
    color: #f4f4f4;
    font-weight: bold;
    font-size: 11.800px;
  }
  .fader-val {
    padding-right: 2px;
    border-right: 2px solid #ddd;
    line-height: 24px;
  }

  /* workspace inspector */
  .inspector {
    position: absolute;
    left: 41px;
    top: 28px;
    width: 390px;
    height: 1280px;
    display: flex;
    flex-direction: column;
    background: #808080;
    border-radius: 6px 6px 8px 8px;
    overflow: hidden;
    box-shadow: 0 2px 10px rgba(0, 0, 0, 0.5);
  }
  .ws-title {
    position: relative;
    height: 21px;
    display: flex;
    align-items: center;
    justify-content: center;
    background: #f3f3f3;
    color: #a2a2a2;
    font: 14.500px "Liberation Sans", sans-serif;
    flex: none;
  }
  .ws-lights, .ui-lights {
    position: absolute;
    left: 7px;
    display: flex;
    gap: 9px;
  }
  .ws-lights span {
    width: 14px;
    height: 14px;
    border-radius: 50%;
    background: #dcdcdc;
  }
  .sec-ws {
    height: 256px;
    padding-top: 5px;
  }
  .sec-ws .tabs {
    margin: 0 auto;
  }
  .ws-group {
    height: 211px;
    margin-top: -9px;
    padding: 12px 3px 3px;
  }
  .ws-group .fader {
    height: 26px;
  }
  .ws-list {
    height: 163px;
    margin-top: 5px;
    display: flex;
    flex-direction: column;
  }
  .ws-row {
    position: relative;
    height: 21px;
    line-height: 21px;
    padding-left: 24px;
    color: #333;
    font-size: 12.500px;
  }
  .ws-row.active {
    padding-left: 45px;
    background: #f2a926;
    color: #6a4a10;
  }
  .caret {
    position: absolute;
    left: 11px;
    top: 4px;
    border: 5.500px solid transparent;
    border-top: 9px solid #111;
    border-bottom: 0;
  }
  .share {
    position: absolute;
    right: 3px;
    top: 2px;
  }
  .ws-bar {
    margin-top: auto;
    height: 22px;
    display: flex;
    border-top: 1px solid #444;
    font-size: 16px;
    line-height: 22px;
    color: #222;
  }
  .ws-bar span {
    width: 20px;
    text-align: center;
    border-right: 1px solid #4a4a4a;
  }
  .gear {
    margin: 4px 4px 0 auto;
    padding-left: 2px;
    border-left: 1px solid #4a4a4a;
  }
  .sec-src {
    height: 460px;
  }
  .size-row {
    display: flex;
    justify-content: flex-end;
    align-items: center;
    gap: 5px;
    margin-top: 4px;
    height: 20px;
    padding-right: 3px;
    color: #3f3f3f;
  }
  .x { margin: 0 8px; }
  .fps { margin-left: 15px; margin-right: -2px; }
  .source-row {
    display: grid;
    grid-template-columns: 105px 120px 38px;
    column-gap: 2px;
    align-items: center;
    height: 19px;
    margin-top: 6px;
    color: #3f3f3f;
  }
  .source-row > * {
    height: 100%;
    line-height: 21px;
  }
  .isf-row {
    display: flex;
    justify-content: space-between;
    align-items: center;
    height: 18px;
    margin-top: 3px;
    color: #3f3f3f;
  }
  .inspect {
    width: 63px;
    height: 100%;
  }
  .isf-row + .strip {
    margin-top: 2px;
    height: 20px;
  }
  .params {
    height: 344px;
    margin-top: 3px;
    padding: 7px 0 0 13px;
    background: #7e7e7e;
    overflow: hidden;
  }
  .param {
    box-sizing: border-box;
    width: 339px;
    height: 40px;
    display: flex;
    flex-direction: column;
  }
  .param label {
    height: 21px;
    line-height: 23px;
    color: #404040;
    font-size: 12.500px;
  }
  .param .sel {
    height: 19px;
  }
  .params > .slider {
    width: 339px;
    margin-top: 6px;
  }
  .fill-label {
    display: block;
    margin-top: 6px;
    height: 14px;
    color: #404040;
  }
  .rslider {
    display: grid;
    grid-template-columns: 269px 63px;
    column-gap: 4px;
    margin-top: 6px;
  }
  .sample {
    margin-top: -3px;
    height: 24px;
  }
  .sec-fx {
    height: 184px;
  }
  .load-row {
    display: grid;
    grid-template-columns: 80px 223px 76px;
    column-gap: 2px;
    height: 18px;
    margin-top: 5px;
    color: #3f3f3f;
    line-height: 20px;
  }
  .load-row > span:first-child {
    padding-left: 2px;
  }
  .save-row {
    display: grid;
    grid-template-columns: 303px 76px;
    column-gap: 3px;
    margin-top: 3px;
    height: 19px;
  }
  .fx-list {
    height: 112px;
    margin-top: 4px;
    background: #7e7e7e;
  }
  .sec-comp {
    flex: 1;
    padding-top: 3px;
  }
  .mode-row {
    display: grid;
    grid-template-columns: 136px 1fr;
    height: 18px;
    margin-top: 4px;
    line-height: 18px;
    color: #3f3f3f;
  }
  .opacity-row {
    display: grid;
    grid-template-columns: 335px 42px;
    column-gap: 5px;
    height: 31px;
    margin-top: 4px;
  }
  .hide {
    display: flex;
    align-items: center;
    justify-content: center;
    background: #c51f27;
    color: #fff;
    font-weight: bold;
    font-size: 13px;
  }
  .comp-tabs {
    margin: 4px 0 0 86px;
  }
  .comp-group {
    height: 173px;
    margin-top: -9px;
    padding-top: 14px;
  }
  .choose {
    margin: 0;
    height: 14px;
    line-height: 14px;
    text-align: center;
    color: #3f3f3f;
  }
  .rect-tabs {
    margin: 5px 0 0 140px;
  }
  .rect-tabs .tab.on {
    font-size: 12.500px;
  }
  .inner-group {
    height: 128px;
    margin: -9px 3px 0 3px;
    padding: 16px 4px 0;
  }
  .modes {
    display: flex;
    justify-content: space-between;
    padding-right: 1px;
    color: #3f3f3f;
  }
  .modes label {
    display: block;
    height: 19px;
    line-height: 14px;
  }
  .modes .sel {
    width: 122px;
    height: 19px;
  }
  .xy {
    display: grid;
    grid-template-columns: 180px 182px;
    column-gap: 5px;
    height: 27px;
    margin-top: 6px;
  }
  .xy.tall {
    height: 31px;
    margin-top: 4px;
  }

  /* media bin */
  .bin {
    position: absolute;
    left: 420px;
    top: 40px;
    width: 512px;
    height: 386px;
    display: flex;
    flex-direction: column;
    background: #0d0d0d;
  }
  .bin > .head {
    padding-left: 12px;
    gap: 4px;
  }
  .bin-body {
    height: 347px;
    margin-right: 3px;
    box-sizing: border-box;
    background: #808080;
    overflow: hidden;
  }
  .bin-row1 {
    display: grid;
    grid-template-columns: 136px 28px 172px 45px 123px;
    height: 19px;
    margin-top: 3px;
  }
  .t-label {
    text-align: center;
    line-height: 19px;
    color: #3a3a3a;
  }
  .bin-row2 {
    display: flex;
    gap: 4px;
    height: 21px;
    margin-top: 3px;
    padding: 0 5px 0 8px;
  }
  .bin-row2 .btn {
    width: 23px;
    font-size: 13px;
  }
  .bin-row2 .lt {
    width: 20px;
  }
  .pill {
    margin-left: auto;
    width: 178px;
    height: 19px;
    display: flex;
    align-items: center;
    gap: 7px;
    box-sizing: border-box;
    padding-left: 7px;
    background: #666;
    border: 1.500px solid #4a4a4a;
    border-radius: 10px;
    color: #e8e8e8;
    font-size: 12.500px;
  }
  .pill i {
    margin: 0 2px 0 auto;
    width: 14px;
    height: 14px;
    border-radius: 50%;
    background: #0a0a0a;
  }
  .bin-main {
    display: grid;
    grid-template-columns: 157px 335px;
    column-gap: 12px;
    margin-top: 4px;
    height: 293px;
  }
  .bin-pages {
    position: relative;
    display: flex;
    flex-direction: column;
  }
  .bin-list {
    position: relative;
    height: 275px;
    background: #6b6b6b;
  }
  .bin-page {
    display: flex;
    align-items: center;
    gap: 7px;
    height: 20px;
    padding-left: 5px;
    margin-right: 13px;
    background: #f2a926;
    color: #ee6d12;
    font-size: 12.500px;
  }
  .bin-bar {
    flex: 1;
    display: flex;
    background: #767676;
    border-top: 1px solid #555;
    line-height: 16px;
  }
  .bin-bar span {
    width: 19px;
    text-align: center;
    font-size: 14px;
    color: #222;
    border-right: 1px solid #555;
  }
  .knob-dot {
    position: absolute;
    right: -9px;
    top: 145px;
    width: 5px;
    height: 5px;
    border-radius: 50%;
    background: #bbb;
  }
  .bin-grid {
    position: relative;
    display: grid;
    grid-template-columns: repeat(4, 73px);
    grid-auto-rows: 64px;
    column-gap: 7px;
    row-gap: 9px;
    box-sizing: border-box;
    padding: 4px 0 0 3px;
    background: #6b6b6b;
    border: 1px solid #4c4c4c;
  }
  .slot {
    box-sizing: border-box;
    border: 2px dashed #434343;
  }
  .clip {
    margin: -2px -3px -3px 0;
    padding-left: 2px;
    display: flex;
    flex-direction: column;
    background: #a50505;
    color: #fff;
    overflow: hidden;
    white-space: nowrap;
  }
  .clip b {
    height: 22px;
    line-height: 17px;
    font-size: 12px;
  }
  .clip-dash {
    margin-top: 10px;
    height: 4px;
    margin-right: 4px;
    background: repeating-linear-gradient(90deg, #e86a5c 0 4px, transparent 4px 5px);
  }
  .clip-name {
    margin-top: 16px;
    color: #f08a8a;
    font-size: 13px;
  }
  .bin-foot {
    position: relative;
    flex: 1;
    display: flex;
    justify-content: flex-end;
    padding-right: 29px;
  }
  .bin-foot span {
    height: 15px;
    width: 88px;
    line-height: 15px;
    text-align: center;
    font-size: 12px;
    background: #8c8c8c;
    color: #2e2e2e;
    white-space: nowrap;
    clip-path: polygon(0 0, 100% 0, 97% 100%, 3% 100%);
  }
  .bin-foot .tri {
    right: 4px;
    bottom: 5px;
  }

  /* audio */
  .audio {
    position: absolute;
    left: 556px;
    top: 435px;
    width: 367px;
    height: 260px;
    display: flex;
    flex-direction: column;
    background: #0d0d0d;
  }
  .audio > .head {
    height: 18px;
    padding-left: 12px;
  }
  .audio-body {
    height: 223px;
    margin: 0 2px 0 3px;
    box-sizing: border-box;
    padding: 4px 3px 0 4px;
    background: #808080;
  }
  .audio-top {
    display: grid;
    grid-template-columns: 23px 1fr;
    column-gap: 2px;
    height: 18px;
  }
  .audio-top .strip {
    height: 18px;
  }
  .on-btn {
    background: #b5232b;
    color: #fff;
    font-weight: bold;
    text-align: center;
    line-height: 18px;
  }
  .audio-main {
    display: flex;
    margin-top: 2px;
  }
  .gain {
    position: relative;
    width: 23px;
    height: 196px;
    display: flex;
    flex-direction: column;
    justify-content: space-between;
    align-items: center;
    background: #646464;
    border-bottom: 1px solid #555;
    box-sizing: border-box;
  }
  .gain-text {
    writing-mode: vertical-rl;
    transform: rotate(180deg);
    color: #f0f0f0;
    font-weight: bold;
    font-size: 12px;
    padding-bottom: 3px;
  }
  .gain-label {
    width: 100%;
    height: 32px;
    text-align: right;
    line-height: 23px;
    border-bottom: 1px solid #555;
    padding: 0;
  }
  .gain-lines {
    position: absolute;
    left: 0;
    right: 0;
    top: 136px;
    height: 2px;
    border-top: 2px solid #d5d5d5;
    border-bottom: 2px solid #d5d5d5;
  }
  .gain-bar {
    width: 12px;
    height: 191px;
    margin-left: 2px;
    background: #2b2b2b;
  }
  .graph {
    display: block;
  }
  .graph text {
    fill: #333;
    font-size: 34px;
    font-family: "DejaVu Sans", sans-serif;
  }
  .audio-foot {
    padding-right: 28px;
  }
  .audio-foot span {
    width: 116px;
    font-size: 12px;
  }

  /* ui inspector */
  .uiwin {
    position: absolute;
    left: 1111px;
    top: 604px;
    width: 360px;
    height: 688px;
    display: flex;
    flex-direction: column;
    background: #7d7d7d;
    border-radius: 6px 6px 3px 3px;
    box-shadow: 0 3px 14px rgba(0, 0, 0, 0.55);
    overflow: hidden;
  }
  .ui-title {
    position: relative;
    height: 21px;
    display: flex;
    align-items: center;
    justify-content: center;
    background: linear-gradient(#e6e6e6, #cdcdcd);
    color: #4a4a4a;
    font: 14.500px "Liberation Sans", sans-serif;
    flex: none;
  }
  .ui-lights {
    gap: 8px;
  }
  .ui-lights span {
    width: 14px;
    height: 14px;
    border-radius: 50%;
    background: #d9d9d9;
  }
  .ui-lights span:first-child {
    background: #7b7b7b;
  }
  .uiwin .sec {
    background: #7d7d7d;
  }
  .ui-sec1 {
    height: 279px;
  }
  .value-row {
    display: grid;
    grid-template-columns: 49px 83px 85px 67px 71px;
    margin-top: 7px;
    height: 20px;
    line-height: 20px;
    color: #3a3a3a;
  }
  .value-row > span:first-child {
    padding-left: 2px;
  }
  .value-row .field:last-child {
    margin-left: 5px;
  }
  .minmax {
    padding-left: 22px;
  }
  .ui-tabs {
    margin: 7px 0 0 30px;
  }
  .ui-group {
    height: 206px;
    width: 354px;
    margin-top: -9px;
  }
  .sync {
    margin: 14px 0 0 5px;
    height: 14px;
    line-height: 14px;
    font-size: 11.500px;
    color: #3a3a3a;
  }
  .recv {
    height: 98px;
    margin: 6px 4px 0 3px;
    background: #656565;
    border-color: #444;
  }
  .recv-row {
    display: grid;
    grid-template-columns: 217px 27px 87px;
    height: 20px;
    line-height: 20px;
    background: #f2a926;
    color: #4c3408;
    margin-right: 13px;
    font-size: 12px;
  }
  .recv-name, .recv-val {
    display: flex;
    align-items: center;
    justify-content: space-between;
    padding: 0 2px 0 3px;
  }
  .recv-val {
    padding: 0 5px 0 8px;
  }
  .recv-check {
    display: flex;
    justify-content: center;
    align-items: center;
    border: solid #a87a1c;
    border-width: 0 1px;
  }
  .recv-cols span {
    position: absolute;
    top: 20px;
    bottom: 0;
    width: 1px;
    background: #585858;
  }
  .recv-cols span:first-child { left: 216px; }
  .recv-cols span:last-child { left: 243px; }
  .recv-btns {
    display: grid;
    grid-template-columns: 21px 21px 90px 90px 101px;
    column-gap: 4px;
    height: 21px;
    margin: 5px 0 0 3px;
  }
  .recv-btns .btn {
    font-size: 12.500px;
  }
  .recv-btns .sel {
    margin-left: 7px;
    width: 101px;
  }
  .ui-checks {
    display: flex;
    flex-direction: column;
    gap: 5px;
    margin: 9px 0 0 6px;
  }
  .check {
    display: flex;
    align-items: center;
    gap: 6px;
    height: 14px;
    font-size: 11.800px;
    color: #363636;
    white-space: nowrap;
  }
  .box {
    position: relative;
    width: 13px;
    height: 13px;
    border: 1px solid #3f3f3f;
    border-radius: 3px;
    background: #717171;
    flex: none;
  }
  .box svg {
    position: absolute;
    left: 0;
    top: -5px;
  }
  .copy-row {
    display: flex;
    gap: 4px;
    height: 19px;
    margin-top: 7px;
  }
  .copy-row .btn {
    width: 50px;
  }
  .ui-sec2 {
    flex: 1;
  }
  .detect-row {
    display: grid;
    grid-template-columns: 63px 102px 55px 109px;
    column-gap: 7px;
    height: 21px;
    margin-top: 7px;
  }
  .or {
    text-align: center;
    line-height: 24px;
    color: #363636;
  }
  .r-enable {
    margin: 12px 0 0 3px;
  }
  .r-norm {
    display: flex;
    justify-content: space-between;
    align-items: center;
    height: 14px;
    margin-top: 40px;
    padding: 0 45px 0 18px;
    font-size: 11.800px;
    color: #363636;
  }
  .r-chain {
    display: flex;
    justify-content: space-between;
    align-items: center;
    height: 17px;
    margin: 94px 16px 0 3px;
  }
  .r-chain .btn {
    width: 149px;
    height: 17px;
    font-size: 11.500px;
    background: #666;
  }
  .r-math {
    margin: 7px 0 0 3px;
  }
  .r-scale {
    display: flex;
    justify-content: space-between;
    margin: 10px 25px 0 3px;
  }
  .r-skip {
    margin: 11px 0 0 3px;
  }
  .r-ignore {
    display: flex;
    justify-content: space-between;
    align-items: center;
    height: 19px;
    margin: 9px 17px 0 3px;
  }
  .r-ignore .field {
    width: 83px;
    height: 19px;
  }
  .copy-row.last {
    margin-top: 14px;
  }

  /* itunes */
  .itunes {
    position: absolute;
    left: 575px;
    top: 878px;
    width: 1286px;
    height: 472px;
    display: flex;
    flex-direction: column;
    background: #fff;
    border-radius: 6px 6px 0 0;
    overflow: hidden;
    font-family: "Liberation Sans", sans-serif;
    color: #444;
  }
  .it-toolbar {
    height: 57px;
    flex: none;
    display: flex;
    align-items: center;
    box-sizing: border-box;
    padding-left: 16px;
    background: #f4f4f4;
    border-bottom: 1px solid #d8d8d8;
  }
  .it-lights {
    display: flex;
    gap: 10px;
  }
  .it-lights span {
    width: 15px;
    height: 15px;
    border-radius: 50%;
    background: #d4d4d4;
  }
  .it-rew {
    margin-left: 29px;
  }
  .it-pause {
    display: flex;
    gap: 6px;
    margin-left: 25px;
  }
  .it-pause span {
    width: 8px;
    height: 27px;
    background: #3c3c3c;
    border-radius: 1px;
  }
  .it-ff {
    margin-left: 24px;
  }
  .it-vol {
    position: relative;
    width: 58px;
    height: 5px;
    margin-left: 26px;
    background: linear-gradient(90deg, #666 50%, #aaa 50%);
    border-radius: 3px;
  }
  .knob {
    position: absolute;
    left: 16px;
    top: -6px;
    width: 17px;
    height: 17px;
    border-radius: 50%;
    background: #fff;
    box-shadow: 0 1px 2px rgba(0, 0, 0, 0.4);
  }
  .it-air {
    width: 48px;
    height: 28px;
    margin-left: 24px;
    display: flex;
    align-items: center;
    justify-content: center;
    box-sizing: border-box;
    border: 1px solid #ebebeb;
    border-radius: 4px;
  }
  .it-art {
    width: 56px;
    height: 57px;
    margin-left: 15px;
    display: flex;
    align-items: center;
    justify-content: center;
    background: #ebebeb;
  }
  .it-lcd {
    position: relative;
    width: 428px;
    height: 56px;
    display: flex;
    flex-direction: column;
    align-items: flex-start;
    padding: 6px 0 0 11px;
    box-sizing: border-box;
    background: #fff;
    color: #777;
    font-size: 17px;
    gap: 3px;
    border-bottom: 4px solid #555;
  }
  .it-listbtn {
    width: 36px;
    height: 28px;
    margin-left: 1px;
    display: flex;
    align-items: center;
    justify-content: flex-end;
    padding-right: 13px;
    border: 1px solid #ebebeb;
    border-radius: 4px;
  }
  .it-search {
    width: 265px;
    height: 27px;
    margin-left: 64px;
    display: flex;
    align-items: center;
    justify-content: center;
    gap: 7px;
    box-sizing: border-box;
    padding-right: 34px;
    border: 1px solid #e6e6e6;
    border-radius: 4px;
    color: #bbb;
    font-size: 17px;
  }
  .it-nav {
    position: relative;
    height: 44px;
    flex: none;
    display: flex;
    align-items: center;
    box-sizing: border-box;
    padding-left: 16px;
    border-bottom: 1px solid #ececec;
  }
  .it-arrows {
    display: flex;
    gap: 1px;
  }
  .it-arrows span {
    width: 33px;
    height: 29px;
    display: flex;
    align-items: center;
    justify-content: center;
    border-radius: 4px;
    box-shadow: 0 1px 2px rgba(0, 0, 0, 0.3);
  }
  .it-popup {
    width: 160px;
    height: 29px;
    margin-left: 9px;
    display: flex;
    align-items: center;
    gap: 6px;
    box-sizing: border-box;
    padding: 0 5px 0 12px;
    border-radius: 4px;
    box-shadow: 0 1px 2px rgba(0, 0, 0, 0.2);
    color: #8a8a8a;
    font-size: 17px;
  }
  .updown {
    margin-left: auto;
  }
  .it-library {
    width: 79px;
    height: 31px;
    margin-left: 193px;
    line-height: 31px;
    text-align: center;
    border-radius: 5px;
    background: #dcdcdc;
    color: #888;
    font-size: 16px;
  }
  .it-content {
    flex: 1;
    display: grid;
    grid-template-columns: 257px 1fr;
    min-height: 0;
  }
  .it-side {
    padding: 27px 0 0 16px;
    background: #f5f5f5;
    overflow: hidden;
  }
  .side-title {
    height: 20px;
    margin-bottom: 3px;
    color: #b4b4b4;
    font-size: 13.500px;
    font-weight: bold;
  }
  .side-title span {
    color: #666;
  }
  .side-row {
    display: flex;
    align-items: center;
    height: 30.800px;
    font-size: 17px;
    color: #444;
    white-space: nowrap;
  }
  .side-ic {
    width: 42px;
    display: flex;
    justify-content: center;
    margin-right: 0;
    padding-right: 6px;
    box-sizing: border-box;
  }
  .it-main {
    padding: 52px 53px 0 51px;
    overflow: hidden;
  }
  .hero {
    display: flex;
    height: 128px;
    border-bottom: 1px solid #e3e3e3;
    box-sizing: content-box;
  }
  .hero-art {
    width: 103px;
    height: 102px;
    display: flex;
    align-items: center;
    justify-content: center;
    background: #ececec;
    border-radius: 3px;
  }
  .hero-info {
    margin-left: 26px;
    width: 400px;
    overflow: hidden;
  }
  .hero-info h1 {
    margin: 9px 0 0;
    font-size: 30px;
    line-height: 36px;
    color: #0a0a0a;
  }
  .hero-info p {
    margin: 6px 0 0;
    font-size: 16px;
    line-height: 18px;
    color: #a2a2a2;
  }
  .hero-info label {
    display: flex;
    align-items: center;
    gap: 8px;
    margin-top: 8px;
    font-size: 15px;
    color: #888;
  }
  .pub-box {
    width: 16px;
    height: 16px;
    box-sizing: border-box;
    border: 1px solid #d8d8d8;
    border-radius: 3px;
  }
  .hero-actions {
    margin-left: auto;
    height: 102px;
    display: flex;
    align-items: center;
    gap: 7px;
    padding-right: 1px;
  }
  .shuffle-link {
    color: #3a7fdc;
    font-size: 17px;
    margin-right: 2px;
  }
  .more-circle {
    width: 41px;
    height: 41px;
    margin-left: 7px;
    border-radius: 50%;
    background: #1f77f0;
    display: flex;
    align-items: center;
    justify-content: center;
    gap: 3px;
  }
  .more-circle i {
    width: 4px;
    height: 4px;
    border-radius: 50%;
    background: #fff;
  }
  .songs {
    margin-left: -25px;
  }
  .song {
    display: grid;
    grid-template-columns: 36px 56px 1fr 28px 63px;
    align-items: center;
    height: 66px;
    border-radius: 3px;
  }
  .song.playing {
    background: #d5d5d5;
  }
  .song-heart {
    display: flex;
    justify-content: center;
    padding-right: 3px;
  }
  .song-art {
    width: 56px;
    height: 56px;
    display: flex;
    align-items: center;
    justify-content: center;
    background: #ececec;
    border-radius: 2px;
  }
  .playing .song-art {
    background: #a9a9a9;
  }
  .song-name {
    padding-left: 17px;
    font-size: 16px;
    color: #555;
  }
  .song-cloud {
    display: flex;
    justify-content: center;
  }
  .song-time {
    padding-left: 16px;
    font-size: 16px;
    color: #666;
  }
  .song-more {
    display: flex;
    gap: 4px;
    padding-left: 21px;
  }
  .song-more i {
    width: 4px;
    height: 4px;
    border-radius: 50%;
    background: #3a7fdc;
  }
</style>
